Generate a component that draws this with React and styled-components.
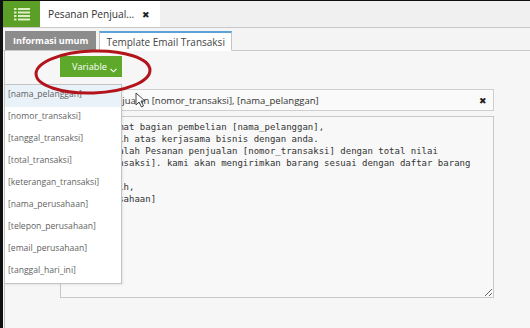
import React from 'react'
import styled, { createGlobalStyle } from 'styled-components'

const variables = [
    'nama_pelanggan',
    'nomor_transaksi',
    'tanggal_transaksi',
    'total_transaksi',
    'keterangan_transaksi',
    'nama_perusahaan',
    'telepon_perusahaan',
    'email_perusahaan',
    'tanggal_hari_ini',
]

const body = `Dengan hormat bagian pembelian [nama_pelanggan],
Terima kasih atas kerjasama bisnis dengan anda.
Berikut adalah Pesanan penjualan [nomor_transaksi] dengan total nilai
[total_transaksi]. kami akan mengirimkan barang sesuai dengan daftar barang

Terima kasih,
[nama_perusahaan]`

const App = () => {
  return (
    <>
      <GlobalStyle />
      <Frame>
        <TopBar>
          <MenuButton>
            <svg width="16" height="14" viewBox="0 0 16 14">
              {[1, 4.5, 8, 11.5].map((y) => (
                <g key={y} fill="#dcefc9">
                  <rect x="0" y={y} width="2.5" height="2" />
                  <rect x="4" y={y} width="12" height="2" />
                </g>
              ))}
            </svg>
          </MenuButton>
          <DocTab>
            <span>Pesanan Penjual…</span>
            <CloseMark>✖</CloseMark>
          </DocTab>
        </TopBar>

        <SubTabs>
          <SubTab>Informasi umum</SubTab>
          <SubTab $active>Template Email Transaksi</SubTab>
        </SubTabs>

        <Panel>
          <Toolbar>
            <VariableButton>
              Variable
              <svg width="7" height="5" viewBox="0 0 7 5">
                <polyline points="0.5,0.8 3.5,3.8 6.5,0.8" fill="none" stroke="#fff" strokeWidth="1.1" />
              </svg>
            </VariableButton>
          </Toolbar>

          <Form>
            <SubjectBox>
              <SubjectText>Pesanan penjualan [nomor_transaksi], [nama_pelanggan]</SubjectText>
              <ClearMark>✖</ClearMark>
            </SubjectBox>
            <BodyArea readOnly defaultValue={body} />
          </Form>

          <Menu>
            {variables.map((v, i) => (
              <MenuItem key={v} $hover={i === 0}>[{v}]</MenuItem>
            ))}
          </Menu>

          <Circle width="124" height="52" viewBox="0 0 124 52">
            <ellipse cx="62" cy="25" rx="57" ry="21" fill="none" stroke="#b3141c" strokeWidth="3" transform="rotate(-2 62 25)" />
          </Circle>

          <Pointer width="11" height="16" viewBox="0 0 11 16">
            <path d="M1 1 L1 13 L4 10 L6.5 15 L8.5 14 L6 9 L10 9 Z" fill="#fff" stroke="#333" strokeWidth="0.9" strokeLinejoin="round" />
          </Pointer>
        </Panel>
      </Frame>
    </>
  )
}

//Styles
const GlobalStyle = createGlobalStyle`
    html, body {
        margin: 0;
        padding: 0;
        background: #f5f5f5;
    }
    body {
        font-family: "Open Sans", "Liberation Sans", sans-serif;
    }
`
const Frame = styled.div`
    width: 530px;
    height: 328px;
    box-sizing: border-box;
    border-top: 1px solid #111;
    border-left: 3px solid #111;
    display: flex;
    flex-direction: column;
    background: #f5f5f5;
    overflow: hidden;
`
const TopBar = styled.div`
    height: 26px;
    display: flex;
    background: #f0f0f0;
    border-bottom: 1px solid #c9c9c9;
    flex-shrink: 0;
`
const MenuButton = styled.div`
    width: 37px;
    background: #5c9f26;
    display: flex;
    align-items: center;
    justify-content: center;
`
const DocTab = styled.div`
    width: 120px;
    background: #fff;
    display: flex;
    align-items: center;
    justify-content: space-between;
    padding: 0 10px 0 8px;
    box-sizing: border-box;
    font-size: 10.2px;
    color: #333;
`
const CloseMark = styled.span`
    font-size: 9px;
    color: #222;
`
const SubTabs = styled.div`
    height: 22px;
    display: flex;
    align-items: flex-end;
    gap: 3px;
    padding-left: 2px;
    border-bottom: 1px solid #c9c9c9;
    background: #f4f4f4;
    flex-shrink: 0;
`
const SubTab = styled.div`
    height: ${p => p.$active ? '20px' : '19px'};
    margin-bottom: ${p => p.$active ? '-1px' : '0'};
    box-sizing: border-box;
    padding: 0 ${p => p.$active ? '6px' : '8px'};
    display: flex;
    align-items: center;
    font-size: ${p => p.$active ? '10px' : '9px'};
    font-weight: ${p => p.$active ? 'normal' : 'bold'};
    color: ${p => p.$active ? '#444' : '#fff'};
    background: ${p => p.$active ? '#fff' : '#8c8c8c'};
    border: ${p => p.$active ? '1px solid #c4c4c4' : 'none'};
    border-top: ${p => p.$active ? '2px solid #5ba2d8' : 'none'};
    border-bottom: ${p => p.$active ? '1px solid #fff' : 'none'};
`
const Panel = styled.div`
    position: relative;
    flex: 1;
    margin-left: 1px;
    border-left: 1px solid #c4c4c4;
    background: #f6f6f6;
`
const Toolbar = styled.div`
    display: flex;
    padding: 5px 0 0 55px;
`
const VariableButton = styled.div`
    width: 62px;
    height: 21px;
    box-sizing: border-box;
    background: #5ea82a;
    color: #fff;
    font-size: 9.2px;
    display: flex;
    align-items: center;
    justify-content: space-between;
    padding: 0 5px 0 12px;
    & svg{
        margin-top: 8px;
    }
`
const Form = styled.div`
    display: flex;
    flex-direction: column;
    gap: 5px;
    padding: 12px 0 0 55px;
    width: 434px;
`
const SubjectBox = styled.div`
    height: 22px;
    box-sizing: border-box;
    border: 1px solid #cfcfcf;
    background: #fafafa;
    display: flex;
    align-items: center;
    justify-content: space-between;
    padding: 0 6px 0 4px;
`
const SubjectText = styled.span`
    font-size: 9.5px;
    color: #333;
    white-space: nowrap;
`
const ClearMark = styled.span`
    font-size: 9px;
    color: #222;
`
const BodyArea = styled.textarea`
    height: 182px;
    box-sizing: border-box;
    border: 1px solid #c8c8c8;
    background: #f8f8f8;
    font-family: "DejaVu Sans Mono", "Liberation Mono", monospace;
    font-size: 9px;
    line-height: 12px;
    color: #333;
    padding: 4px 3px;
    resize: both;
    outline: none;
    white-space: pre;
    overflow: hidden;
`
const Menu = styled.div`
    position: absolute;
    left: 0;
    top: 33px;
    width: 116px;
    background: #fff;
    border: 1px solid #c4c4c4;
    border-left: none;
    box-shadow: 1px 1px 2px rgba(0,0,0,0.08);
`
const MenuItem = styled.div`
    height: 22px;
    box-sizing: border-box;
    display: flex;
    align-items: center;
    padding: 0 0 4px 3px;
    font-size: 8.6px;
    color: #5f5f5f;
    background: ${p => p.$hover ? '#e9f1f9' : 'transparent'};
`
const Circle = styled.svg`
    position: absolute;
    left: 26px;
    top: -4px;
`
const Pointer = styled.svg`
    position: absolute;
    left: 130px;
    top: 41px;
`
//------Styles
export default App
